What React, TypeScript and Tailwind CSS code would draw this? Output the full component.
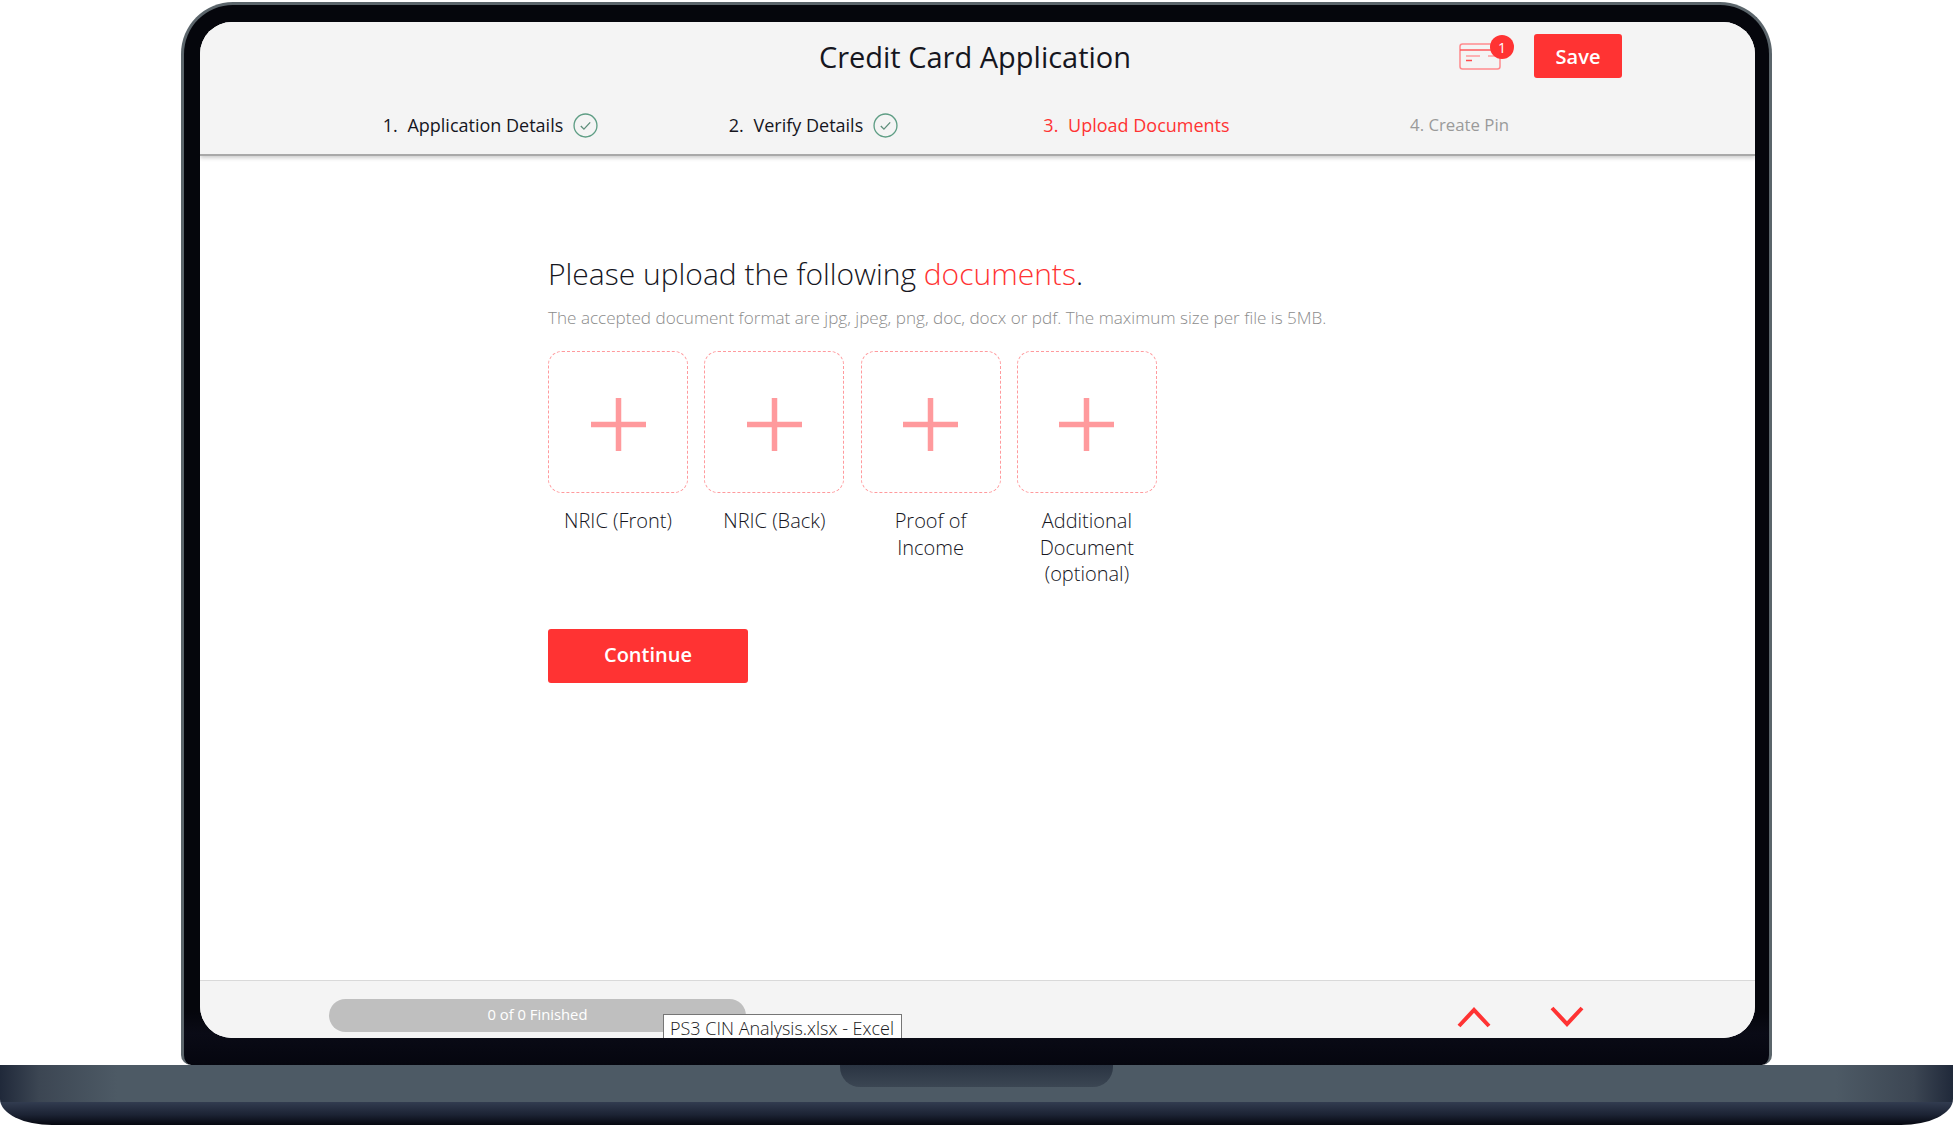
import React from 'react';

const steps = [
  { label: 'Application Details', state: 'done' },
  { label: 'Verify Details', state: 'done' },
  { label: 'Upload Documents', state: 'active' },
  { label: 'Create Pin', state: 'todo' },
];

const documents = [
  { lines: ['NRIC (Front)'] },
  { lines: ['NRIC (Back)'] },
  { lines: ['Proof of', 'Income'] },
  { lines: ['Additional', 'Document', '(optional)'] },
];

const CheckCircle = () => (
  <svg width="25" height="25" viewBox="0 0 24 24" fill="none" className="shrink-0">
    <circle cx="12" cy="12" r="11" stroke="#5f9e85" strokeWidth="1.3" />
    <path d="M7.5 12.5l3 3 6-6.5" stroke="#5f8f7c" strokeWidth="1.3" />
  </svg>
);

const CardIcon = () => (
  <svg width="42" height="27" viewBox="0 0 42 27" fill="none">
    <rect x="1" y="1" width="40" height="25" rx="2.5" stroke="#ff8a8d" strokeWidth="1.5" />
    <path d="M1 7h40" stroke="#ff5a5d" strokeWidth="1.5" />
    <path d="M7 13h14M29 13h8" stroke="#ff9a9d" strokeWidth="1.5" />
    <path d="M7 17.5h6" stroke="#ff4a4d" strokeWidth="1.5" />
  </svg>
);

const Chevron = ({ up }: { up?: boolean }) => (
  <svg width="34" height="21" viewBox="0 0 34 21" fill="none">
    <path d={up ? 'M2 19L17 3l15 16' : 'M2 2l15 16L32 2'} stroke="#ff3333" strokeWidth="4" />
  </svg>
);

const UploadCard = ({ lines }: { lines: string[] }) => (
  <div className="w-[140px] flex flex-col items-center">
    <button className="w-[140px] h-[142px] rounded-[14px] border border-dashed border-[#ff9a9d] flex items-center justify-center">
      <svg width="55" height="53" viewBox="0 0 55 53" className="block mt-[5px]">
        <path d="M27.5 0v53M0 26.5h55" stroke="#ff9a9d" strokeWidth="5.5" />
      </svg>
    </button>
    <div className="mt-[15px] text-[20px] leading-[26.5px] font-[350] text-[#16161e] text-center">
      {lines.map((line) => (
        <div key={line}>{line}</div>
      ))}
    </div>
  </div>
);

export default function App() {
  return (
    <div className="w-[1953px] h-[1125px] bg-white overflow-hidden flex flex-col font-['Open_Sans','Noto_Sans',sans-serif]">
      {/* Laptop lid */}
      <div className="ml-[181px] mt-[2px] w-[1591px] h-[1063px] rounded-t-[52px] rounded-b-[10px] bg-[linear-gradient(180deg,#05060c_95%,#0a0b16_97%,#05060f_100%)] border-x-[3px] border-t-[3px] border-[#5b656b] px-[16px] pt-[17px]">
        <div className="relative h-[1016px] w-[1555px] rounded-[32px] overflow-hidden bg-white flex flex-col">
          {/* Header */}
          <header className="h-[134px] shrink-0 bg-[#f4f4f4] border-b-2 border-[#a9a9a9] shadow-[0_2px_4px_rgba(0,0,0,0.2)] relative z-10">
            <div className="h-[90px] relative flex items-center justify-center">
              <h1 className="text-[29px] leading-none text-[#16161e] ml-[-5px] mt-[-21px]">Credit Card Application</h1>
              <div className="absolute left-[1259px] top-[21px]">
                <CardIcon />
                <span className="absolute left-[31px] top-[-8px] w-[24px] h-[24px] rounded-full bg-[#ff3333] text-white text-[14px] flex items-center justify-center">
                  1
                </span>
              </div>
              <button className="absolute left-[1334px] top-[12px] w-[88px] h-[44px] rounded-[3px] bg-[#ff3333] text-white text-[20px] font-semibold pt-[2px]">
                Save
              </button>
            </div>
            <div className="ml-[129px] w-[1292px] grid grid-cols-4">
              {steps.map((step, i) => (
                <div
                  key={step.label}
                  className={`h-[26px] flex items-center justify-center gap-[10px] ${
                    step.state === 'done'
                      ? 'text-[18px] text-[#16161e]'
                      : step.state === 'active'
                        ? 'text-[18px] text-[#ff3333]'
                        : 'text-[16.8px] text-[#9a9a9a]'
                  }`}
                >
                  <span>
                    {i + 1}. <span className={step.state === 'todo' ? '' : 'ml-[5px]'}>{step.label}</span>
                  </span>
                  {step.state === 'done' && <CheckCircle />}
                </div>
              ))}
            </div>
          </header>

          {/* Upload form */}
          <main className="flex-1 pl-[348px] pt-[96px] bg-white">
            <h2 className="text-[30px] leading-[44px] font-light text-[#16161e]">
              Please upload the following <span className="text-[#ff3333]">documents</span>.
            </h2>
            <p className="mt-[11px] text-[17.1px] leading-[22px] font-light text-[#8c8c8c]">
              The accepted document format are jpg, jpeg, png, doc, docx or pdf. The maximum size per file is 5MB.
            </p>
            <div className="mt-[22px] flex gap-[16.3px] h-[278px]">
              {documents.map((doc) => (
                <UploadCard key={doc.lines[0]} lines={doc.lines} />
              ))}
            </div>
            <button className="w-[200px] h-[54px] rounded-[3px] bg-[#ff3333] text-white text-[20px] font-semibold pb-[2px]">
              Continue
            </button>
          </main>

          {/* Footer */}
          <footer className="h-[58px] shrink-0 bg-[#f4f4f4] border-t border-[#d9d9d9] pl-[129px] pt-[18px] flex items-start">
            <div className="w-[417px] h-[33px] rounded-full bg-[#bfbfbf] text-white text-[14.8px] flex items-center justify-center pb-[2px]">
              0 of 0 Finished
            </div>
            <div className="ml-[711px] mt-[8px]">
              <Chevron up />
            </div>
            <div className="ml-[59px] mt-[7px]">
              <Chevron />
            </div>
          </footer>

          {/* OS tooltip caught in the capture */}
          <div className="absolute left-[463px] bottom-0 w-[239px] h-[24px] bg-white border border-b-0 border-[#767676] pl-[6px] text-[18px] leading-[26px] font-light text-[#1a1a22] whitespace-nowrap overflow-hidden z-20">
            PS3 CIN Analysis.xlsx - Excel
          </div>
        </div>
      </div>

      {/* Laptop base */}
      <div className="h-[60px] shrink-0 rounded-bl-[52px_26px] rounded-br-[52px_26px] overflow-hidden flex flex-col relative">
        <div className="h-[37px] bg-[linear-gradient(90deg,#20293a_0%,#3c4653_2%,#4d5a65_6%,#4d5a65_94%,#3c4653_98%,#20293a_100%)] flex justify-center">
          <div className="w-[273px] h-[22px] rounded-b-[20px] bg-[linear-gradient(180deg,#2a3442,#3b4653)]" />
        </div>
        <div className="flex-1 bg-[linear-gradient(180deg,#323c50_0%,#1c2334_55%,#05070f_100%)]" />
      </div>
    </div>
  );
}
